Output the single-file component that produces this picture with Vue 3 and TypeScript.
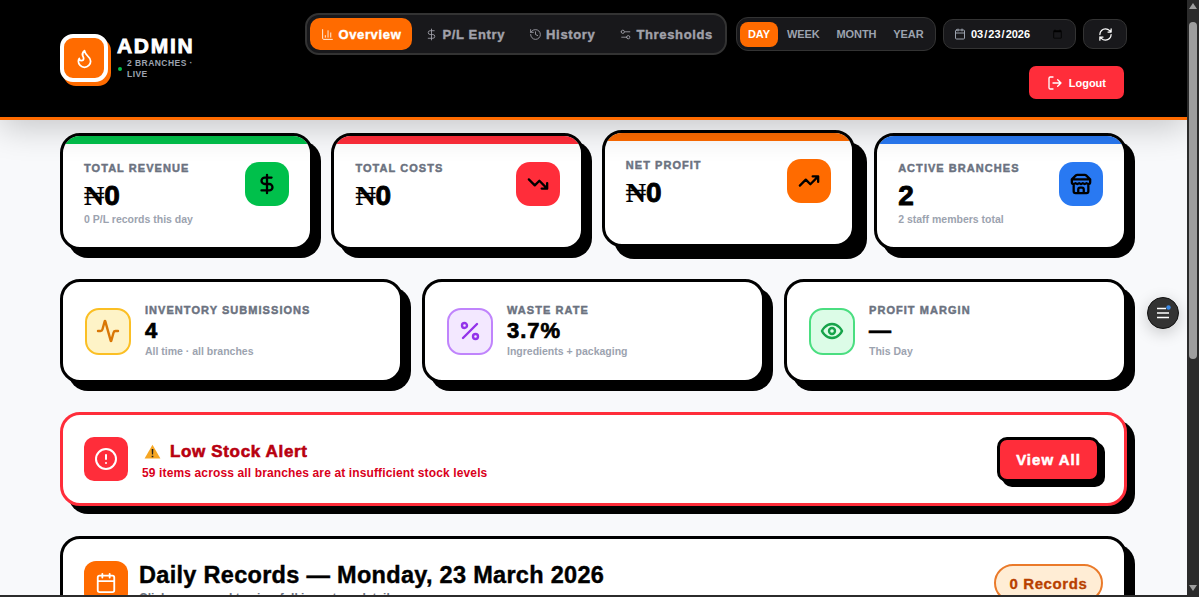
<template>
  <div class="shell">
    <div class="page">
      <header class="topbar">
        <div class="brand">
          <div class="logo">
            <svg class="ic" viewBox="0 0 24 24" width="21" height="21"><path :d="icons.flame" /></svg>
          </div>
          <div class="brand-text">
            <div class="brand-name">ADMIN</div>
            <div class="brand-sub"><i class="live-dot"></i><span>2 BRANCHES · LIVE</span></div>
          </div>
        </div>
        <div class="controls">
          <div class="controls-row">
            <nav class="tabs">
              <button v-for="tab in tabs" :key="tab.label" class="tab" :class="{ active: tab.active }">
                <svg class="ic" viewBox="0 0 24 24" width="13" height="13"><path :d="tab.icon" /></svg>
                {{ tab.label }}
              </button>
            </nav>
            <div class="periods">
              <button v-for="p in periods" :key="p" class="period" :class="{ active: p === 'DAY' }">{{ p }}</button>
            </div>
            <label class="date-box">
              <svg class="ic" viewBox="0 0 24 24" width="12" height="12"><path :d="icons.calendar" /></svg>
              <input type="date" value="2026-03-23" />
            </label>
            <button class="refresh">
              <svg class="ic" viewBox="0 0 24 24" width="15" height="15"><path :d="icons.refresh" /></svg>
            </button>
          </div>
          <button class="logout">
            <svg class="ic" viewBox="0 0 24 24" width="16" height="16"><path :d="icons.logout" /></svg>
            Logout
          </button>
        </div>
      </header>

      <main class="content">
        <section class="stats">
          <div v-for="s in stats" :key="s.label" class="stat" :class="{ lifted: s.lifted }">
            <div class="stat-bar" :style="{ background: s.color }"></div>
            <div class="stat-body">
              <div>
                <div class="label">{{ s.label }}</div>
                <div class="stat-value"><span v-if="s.naira" class="naira">₦</span>{{ s.value }}</div>
                <div class="sub">{{ s.sub }}</div>
              </div>
              <div class="stat-icon" :style="{ background: s.color }">
                <svg class="ic" viewBox="0 0 24 24" width="22" height="22"><path :d="s.icon" /></svg>
              </div>
            </div>
          </div>
        </section>

        <section class="minis">
          <div v-for="m in minis" :key="m.label" class="mini">
            <div class="mini-icon" :style="{ background: m.bg, borderColor: m.border, color: m.color }">
              <svg class="ic" viewBox="0 0 24 24" width="24" height="24"><path :d="m.icon" /></svg>
            </div>
            <div>
              <div class="label">{{ m.label }}</div>
              <div class="mini-value">{{ m.value }}</div>
              <div class="sub">{{ m.sub }}</div>
            </div>
          </div>
        </section>

        <section class="alert">
          <div class="alert-icon">
            <svg class="ic" viewBox="0 0 24 24" width="24" height="24"><path :d="icons.alert" /></svg>
          </div>
          <div class="alert-text">
            <div class="alert-title">
              <svg viewBox="0 0 20 18" width="17" height="15"><path d="M10 1 19.5 17.5H.5Z" fill="#f6a623" /><path d="M9 6h2l-.3 6.5H9.3ZM9 14h2v2H9Z" fill="#222" /></svg>
              Low Stock Alert
            </div>
            <div class="alert-sub">59 items across all branches are at insufficient stock levels</div>
          </div>
          <button class="view-all">View All</button>
        </section>

        <section class="records">
          <div class="records-icon">
            <svg class="ic" viewBox="0 0 24 24" width="22" height="22"><path :d="icons.calendar" /></svg>
          </div>
          <div class="records-text">
            <div class="records-title">Daily Records — Monday, 23 March 2026</div>
            <div class="records-sub">Click any record to view full inventory detail</div>
          </div>
          <div class="records-pill">0 Records</div>
        </section>
      </main>

      <button class="fab">
        <svg viewBox="0 0 20 20" width="20" height="20">
          <path d="M4 5.5h9M4 10h12M4 14.5h12" stroke="#fff" stroke-width="1.6" fill="none" />
          <circle cx="15.5" cy="4.5" r="2.2" fill="#3b8ae6" />
        </svg>
      </button>
      <div class="bottom-edge"></div>
    </div>
    <div class="scrollbar">
      <i class="arrow up"></i>
      <div class="thumb"></div>
      <i class="arrow down"></i>
    </div>
  </div>
</template>

<script setup lang="ts">
const icons = {
  flame: 'M8.5 14.5A2.5 2.5 0 0 0 11 12c0-1.38-.5-2-1-3-1.072-2.143-.224-4.054 2-6 .5 2.5 2 4.9 4 6.5 2 1.6 3 3.5 3 5.5a7 7 0 1 1-14 0c0-1.153.433-2.294 1-3a2.5 2.5 0 0 0 2.5 2.5z',
  chart: 'M3 3v16a2 2 0 0 0 2 2h16M18 17V9M13 17V5M8 17v-3',
  dollar: 'M12 2v20M17 5H9.5a3.5 3.5 0 0 0 0 7h5a3.5 3.5 0 0 1 0 7H6',
  history: 'M3 12a9 9 0 1 0 9-9 9.75 9.75 0 0 0-6.74 2.74L3 8M3 3v5h5M12 7v5l4 2',
  sliders: 'M20 7h-9M14 17H5M14 17a3 3 0 1 0 6 0a3 3 0 1 0-6 0M4 7a3 3 0 1 0 6 0a3 3 0 1 0-6 0',
  calendar: 'M8 2v4M16 2v4M5 4h14a2 2 0 0 1 2 2v14a2 2 0 0 1-2 2H5a2 2 0 0 1-2-2V6a2 2 0 0 1 2-2ZM3 10h18',
  refresh: 'M3 12a9 9 0 0 1 9-9 9.75 9.75 0 0 1 6.74 2.74L21 8M21 3v5h-5M21 12a9 9 0 0 1-9 9 9.75 9.75 0 0 1-6.74-2.74L3 16M8 16H3v5',
  logout: 'M9 21H5a2 2 0 0 1-2-2V5a2 2 0 0 1 2-2h4M16 17l5-5-5-5M21 12H9',
  down: 'M22 17 13.5 8.5l-5 5L2 7M16 17h6v-6',
  up: 'M22 7 13.5 15.5l-5-5L2 17M16 7h6v6',
  store: 'm2 7 4.41-4.41A2 2 0 0 1 7.83 2h8.34a2 2 0 0 1 1.42.59L22 7M4 12v8a2 2 0 0 0 2 2h12a2 2 0 0 0 2-2v-8M15 22v-4a2 2 0 0 0-2-2h-2a2 2 0 0 0-2 2v4M2 7h20M22 7v3a2 2 0 0 1-2 2a2.7 2.7 0 0 1-1.59-.63.7.7 0 0 0-.82 0A2.7 2.7 0 0 1 16 12a2.7 2.7 0 0 1-1.59-.63.7.7 0 0 0-.82 0A2.7 2.7 0 0 1 12 12a2.7 2.7 0 0 1-1.59-.63.7.7 0 0 0-.82 0A2.7 2.7 0 0 1 8 12a2.7 2.7 0 0 1-1.59-.63.7.7 0 0 0-.82 0A2.7 2.7 0 0 1 4 12a2 2 0 0 1-2-2V7',
  activity: 'M22 12h-2.48a2 2 0 0 0-1.93 1.46l-2.35 8.36a.25.25 0 0 1-.48 0L9.24 2.18a.25.25 0 0 0-.48 0l-2.35 8.36A2 2 0 0 1 4.49 12H2',
  percent: 'M19 5 5 19M4 6.5a2.5 2.5 0 1 0 5 0a2.5 2.5 0 1 0-5 0M15 17.5a2.5 2.5 0 1 0 5 0a2.5 2.5 0 1 0-5 0',
  eye: 'M2 12s3-7 10-7 10 7 10 7-3 7-10 7-10-7-10-7ZM9 12a3 3 0 1 0 6 0a3 3 0 1 0-6 0',
  alert: 'M2 12a10 10 0 1 0 20 0a10 10 0 1 0-20 0M12 8v4M12 16h.01',
}

const tabs = [
  { label: 'Overview', icon: icons.chart, active: true },
  { label: 'P/L Entry', icon: icons.dollar, active: false },
  { label: 'History', icon: icons.history, active: false },
  { label: 'Thresholds', icon: icons.sliders, active: false },
]

const periods = ['DAY', 'WEEK', 'MONTH', 'YEAR']

const stats = [
  { label: 'Total Revenue', value: '0', naira: true, sub: '0 P/L records this day', color: '#00c04b', icon: icons.dollar, lifted: false },
  { label: 'Total Costs', value: '0', naira: true, sub: '', color: '#ff2d3a', icon: icons.down, lifted: false },
  { label: 'Net Profit', value: '0', naira: true, sub: '', color: '#ff6b00', icon: icons.up, lifted: true },
  { label: 'Active Branches', value: '2', naira: false, sub: '2 staff members total', color: '#2979f2', icon: icons.store, lifted: false },
]

const minis = [
  { label: 'Inventory Submissions', value: '4', sub: 'All time · all branches', bg: '#fef3c7', border: '#fbbf24', color: '#d97706', icon: icons.activity },
  { label: 'Waste Rate', value: '3.7%', sub: 'Ingredients + packaging', bg: '#f3e8ff', border: '#c084fc', color: '#9333ea', icon: icons.percent },
  { label: 'Profit Margin', value: '—', sub: 'This Day', bg: '#dcfce7', border: '#4ade80', color: '#16a34a', icon: icons.eye },
]
</script>

<style scoped>
.shell {
  display: flex;
  width: 1199px;
  height: 597px;
  overflow: hidden;
  font-family: "Liberation Sans", Arial, sans-serif;
  color: #000;
}
.page {
  flex: 1;
  position: relative;
  background: #f8f9fb;
  overflow: hidden;
}
button {
  font-family: inherit;
  cursor: pointer;
}
.ic {
  fill: none;
  stroke: currentColor;
  stroke-width: 2;
  stroke-linecap: round;
  stroke-linejoin: round;
  flex: none;
}

/* header */
.topbar {
  position: relative;
  z-index: 2;
  display: flex;
  justify-content: space-between;
  height: 120px;
  box-sizing: border-box;
  padding: 13px 60px 0;
  background: #000;
  border-bottom: 3px solid #ff6b00;
  box-shadow: 0 8px 32px rgba(0, 0, 0, 0.2);
}
.brand {
  display: flex;
  gap: 9px;
  margin-top: 21px;
  height: 52px;
}
.logo {
  width: 48px;
  height: 48px;
  box-sizing: border-box;
  display: flex;
  align-items: center;
  justify-content: center;
  background: #ff6b00;
  border: 4px solid #fff;
  border-radius: 13px;
  box-shadow: 3px 4px 0 #ff6b00;
  color: #fff;
}
.brand-name {
  color: #fff;
  font-size: 21px;
  font-weight: 700;
  line-height: 24px;
  -webkit-text-stroke: 0.8px #fff;
  letter-spacing: 1.7px;
}
.brand-sub {
  display: flex;
  align-items: center;
  gap: 5px;
  width: 76px;
  margin-left: 1px;
  color: #9ca3af;
  font-size: 8.5px;
  font-weight: 700;
  line-height: 11px;
  letter-spacing: 0.45px;
}
.live-dot {
  flex: none;
  width: 4px;
  height: 4px;
  border-radius: 50%;
  background: #00c04b;
}
.controls {
  display: flex;
  flex-direction: column;
  align-items: flex-end;
}
.controls-row {
  display: flex;
  align-items: center;
  gap: 7px;
}
.tabs {
  display: flex;
  align-items: center;
  gap: 2px;
  height: 42px;
  box-sizing: border-box;
  margin-right: 2px;
  padding: 0 1px 0 3px;
  background: #18181b;
  border: 2px solid #333;
  border-radius: 14px;
}
.tab {
  display: flex;
  align-items: center;
  gap: 4px;
  height: 32px;
  padding: 0 11px;
  background: none;
  border: 0;
  border-radius: 10px;
  color: #a1a1aa;
  font-size: 13px;
  font-weight: 700;
  letter-spacing: 0.65px;
  -webkit-text-stroke: 0.4px currentColor;
}
.tab .ic {
  stroke-width: 1.6;
}
.tab.active {
  background: #ff6b00;
  color: #fff;
}
.periods {
  display: flex;
  align-items: center;
  gap: 1px;
  width: 200px;
  height: 34px;
  box-sizing: border-box;
  padding: 0 3px;
  background: #18181b;
  border: 1px solid #333;
  border-radius: 12px;
}
.period {
  height: 25px;
  padding: 0 8px;
  background: none;
  border: 0;
  border-radius: 8px;
  color: #9ca3af;
  font-size: 11px;
  font-weight: 700;
  letter-spacing: -0.1px;
}
.period.active {
  background: #ff6b00;
  color: #fff;
}
.date-box {
  display: flex;
  align-items: center;
  gap: 4px;
  width: 133px;
  height: 30px;
  box-sizing: border-box;
  padding: 0 10px;
  background: #18181b;
  border: 1px solid #333;
  border-radius: 10px;
  color: #9ca3af;
}
.date-box input {
  flex: 1;
  min-width: 0;
  padding: 0;
  border: 0;
  outline: 0;
  background: none;
  color: #fff;
  font-family: inherit;
  font-size: 11px;
  font-weight: 700;
}
.refresh {
  display: flex;
  align-items: center;
  justify-content: center;
  width: 44px;
  height: 30px;
  background: #18181b;
  border: 1px solid #333;
  border-radius: 10px;
  color: #fff;
}
.logout {
  display: flex;
  align-items: center;
  gap: 6px;
  height: 33px;
  margin: 11px 3px 0 0;
  padding: 0 18px;
  background: #ff2d3a;
  border: 0;
  border-radius: 7px;
  color: #fff;
  font-size: 11px;
  font-weight: 700;
}

/* cards */
.content {
  display: flex;
  flex-direction: column;
  padding: 13px 60px 0;
}
.stats {
  display: grid;
  grid-template-columns: repeat(4, 1fr);
  gap: 18.5px;
  margin-bottom: 29px;
}
.stat {
  height: 117px;
  box-sizing: border-box;
  background: #fff;
  border: 3px solid #000;
  border-radius: 20px;
  box-shadow: 8px 8px 0 #000;
  overflow: hidden;
}
.stat.lifted {
  transform: translate(-1px, -3px);
  box-shadow: 12px 12px 0 #000;
}
.stat-bar {
  height: 8px;
}
.stat-body {
  display: flex;
  justify-content: space-between;
  align-items: flex-start;
  padding: 18px 21px 0 21px;
}
.label {
  color: #6b7280;
  font-size: 11px;
  font-weight: 700;
  line-height: 14px;
  letter-spacing: 1.05px;
  text-transform: uppercase;
  -webkit-text-stroke: 0.45px currentColor;
}
.stat-body .label {
  margin-top: -1px;
}
.stat-value {
  margin-top: 5px;
  font-size: 28px;
  font-weight: 700;
  line-height: 32px;
  -webkit-text-stroke: 0.9px #000;
}
.naira {
  font-family: "Liberation Serif", serif;
  -webkit-text-stroke: 0.2px #000;
}
.sub {
  color: #9ca3af;
  font-size: 10.5px;
  font-weight: 700;
  line-height: 14px;
}
.stat-icon {
  width: 44px;
  height: 44px;
  display: flex;
  align-items: center;
  justify-content: center;
  border-radius: 14px;
  color: #000;
}
.stat-icon .ic {
  stroke-width: 2.5;
}
.minis {
  display: grid;
  grid-template-columns: repeat(3, 1fr);
  gap: 19px;
  margin-bottom: 29px;
}
.mini {
  display: flex;
  align-items: center;
  gap: 14px;
  height: 104px;
  box-sizing: border-box;
  padding: 0 22px;
  background: #fff;
  border: 3px solid #000;
  border-radius: 20px;
  box-shadow: 8px 8px 0 #000;
}
.mini .label {
  margin-top: -2px;
}
.mini .ic {
  stroke-width: 2.4;
}
.mini-icon {
  width: 46px;
  height: 47px;
  box-sizing: border-box;
  flex: none;
  display: flex;
  align-items: center;
  justify-content: center;
  border: 2px solid;
  border-radius: 14px;
}
.mini-value {
  margin: 2px 0 1px;
  font-size: 22px;
  font-weight: 700;
  line-height: 24px;
  letter-spacing: 1px;
  -webkit-text-stroke: 0.7px #000;
}

/* alert */
.alert {
  display: flex;
  align-items: center;
  gap: 14px;
  height: 94px;
  box-sizing: border-box;
  padding: 0 24px 0 21px;
  background: #fff;
  border: 3px solid #ff2d3a;
  border-radius: 20px;
  box-shadow: 8px 8px 0 #000;
  margin-bottom: 30px;
}
.alert-icon {
  width: 44px;
  height: 44px;
  flex: none;
  display: flex;
  align-items: center;
  justify-content: center;
  background: #ff2d3a;
  border-radius: 10px;
  color: #fff;
}
.alert-text {
  flex: 1;
  margin-top: 4px;
}
.alert-title {
  display: flex;
  align-items: center;
  gap: 9px;
  margin-left: 2px;
  color: #b8000f;
  font-size: 17px;
  font-weight: 700;
  line-height: 22px;
  letter-spacing: 0.65px;
  -webkit-text-stroke: 0.6px currentColor;
}
.alert-sub {
  margin-top: 1px;
  color: #d9001b;
  font-size: 12px;
  font-weight: 700;
  line-height: 18px;
  letter-spacing: 0.13px;
}
.view-all {
  width: 103px;
  height: 45px;
  background: #ff2d3a;
  border: 3px solid #000;
  border-radius: 10px;
  box-shadow: 5px 5px 0 #000;
  color: #fff;
  font-size: 15px;
  font-weight: 700;
  letter-spacing: 1px;
  -webkit-text-stroke: 0.5px #fff;
}

/* records */
.records {
  display: flex;
  align-items: flex-start;
  gap: 11px;
  height: 140px;
  flex: none;
  box-sizing: border-box;
  padding: 22px 21px 0;
  background: #fff;
  border: 3px solid #000;
  border-radius: 20px;
  box-shadow: 8px 8px 0 #000;
}
.records-icon {
  width: 44px;
  height: 44px;
  flex: none;
  display: flex;
  align-items: center;
  justify-content: center;
  background: #ff6b00;
  border-radius: 12px;
  color: #fff;
}
.records-text {
  flex: 1;
}
.records-title {
  font-size: 23.5px;
  font-weight: 700;
  line-height: 28px;
  letter-spacing: 0.3px;
  -webkit-text-stroke: 0.4px #000;
}
.records-sub {
  margin-top: 1px;
  color: #6b7280;
  font-size: 12px;
  font-weight: 700;
  line-height: 16px;
}
.records-pill {
  width: 109px;
  height: 38px;
  box-sizing: border-box;
  margin-top: 3px;
  display: flex;
  align-items: center;
  justify-content: center;
  background: #ffedd5;
  border: 2px solid #ea7a2a;
  border-radius: 19px;
  color: #b84000;
  font-size: 15px;
  font-weight: 700;
  letter-spacing: 0.6px;
  -webkit-text-stroke: 0.3px currentColor;
}

/* floating bits */
.fab {
  position: absolute;
  left: 1147px;
  top: 297px;
  z-index: 3;
  width: 32px;
  height: 32px;
  padding: 0;
  display: flex;
  align-items: center;
  justify-content: center;
  background: #333;
  border: 1px solid #111;
  border-radius: 50%;
  box-shadow: 0 4px 16px rgba(0, 0, 0, 0.2);
}
.bottom-edge {
  position: absolute;
  left: 0;
  right: 0;
  bottom: 0;
  z-index: 4;
  height: 2px;
  background: #2b2b2b;
}
.scrollbar {
  position: relative;
  flex: none;
  width: 12px;
  background: #2b2b2b;
}
.thumb {
  position: absolute;
  left: 2px;
  top: 22px;
  width: 8px;
  height: 337px;
  border-radius: 4px;
  background: #9e9e9e;
}
.arrow {
  position: absolute;
  left: 2px;
  border-left: 4px solid transparent;
  border-right: 4px solid transparent;
}
.arrow.up {
  top: 3px;
  border-bottom: 6px solid #9e9e9e;
}
.arrow.down {
  bottom: 6px;
  border-top: 6px solid #9e9e9e;
}
</style>
